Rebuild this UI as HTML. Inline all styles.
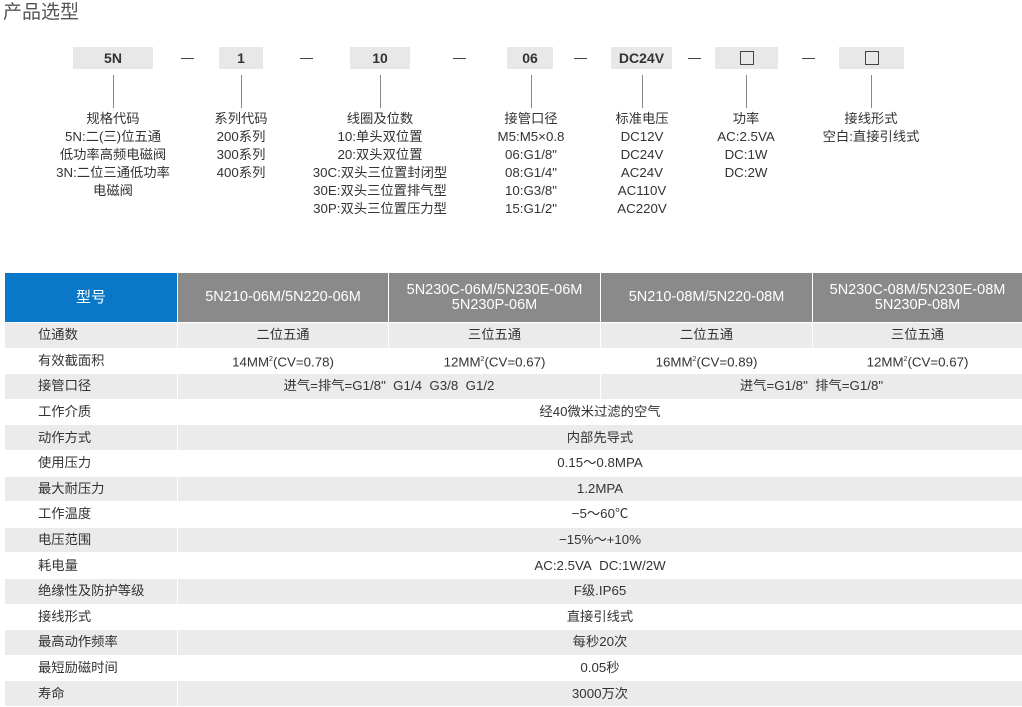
<!DOCTYPE html>
<html><head><meta charset="utf-8"><style>
*{margin:0;padding:0;box-sizing:border-box}
body{width:1022px;height:706px;background:#fff;position:relative;overflow:hidden;font-family:"Liberation Sans","Noto Sans CJK SC",sans-serif;color:#333}
.t{position:absolute;left:3px;top:1px;font-size:19px;color:#555;line-height:24px}
.b{position:absolute;top:47px;height:22px;background:#e8e8e8;font-size:14px;font-weight:bold;text-align:center;line-height:22px;color:#333}
.sq{display:inline-block;width:14px;height:14px;border:1.5px solid #444;vertical-align:middle;margin-top:-3px}
.d{position:absolute;top:58px;width:13px;height:1px;background:#444}
.v{position:absolute;top:75px;width:1px;height:33px;background:#888}
.l{position:absolute;top:110px;font-size:13.3px;line-height:18px;text-align:center;width:200px;color:#333}
table{position:absolute;left:4px;top:272px;width:1018px;border-collapse:collapse;font-size:13.3px;table-layout:fixed}
td{border:1px solid #fff;height:25.6px;text-align:center;padding:0;line-height:14px}
td:first-child{text-align:left;padding-left:33px}
tr:nth-child(even) td{background:#ebebeb}
tr.h td{height:50px;background:#8a8a8a;color:#fff;font-size:14.5px;line-height:15px}
tr.h td:first-child{background:#0a78c8;text-align:center;padding-left:0;font-size:15px}
sup{font-size:7px}
</style></head><body>
<div class="t">产品选型</div>
<div class="b" style="left:73px;width:80px">5N</div>
<div class="b" style="left:219px;width:44px">1</div>
<div class="b" style="left:350px;width:60px">10</div>
<div class="b" style="left:507px;width:46px">06</div>
<div class="b" style="left:611px;width:61px">DC24V</div>
<div class="b" style="left:715px;width:63px"><span class="sq"></span></div>
<div class="b" style="left:839px;width:65px"><span class="sq"></span></div>
<div class="d" style="left:181px"></div><div class="d" style="left:300px"></div><div class="d" style="left:453px"></div>
<div class="d" style="left:574px"></div><div class="d" style="left:688px"></div><div class="d" style="left:802px"></div>
<div class="v" style="left:113px"></div><div class="v" style="left:241px"></div><div class="v" style="left:380px"></div>
<div class="v" style="left:531px"></div><div class="v" style="left:642px"></div><div class="v" style="left:746px"></div><div class="v" style="left:871px"></div>
<div class="l" style="left:13px">规格代码<br>5N:二(三)位五通<br>低功率高频电磁阀<br>3N:二位三通低功率<br>电磁阀</div>
<div class="l" style="left:141px">系列代码<br>200系列<br>300系列<br>400系列</div>
<div class="l" style="left:280px">线圈及位数<br>10:单头双位置<br>20:双头双位置<br>30C:双头三位置封闭型<br>30E:双头三位置排气型<br>30P:双头三位置压力型</div>
<div class="l" style="left:431px">接管口径<br>M5:M5×0.8<br>06:G1/8"<br>08:G1/4"<br>10:G3/8"<br>15:G1/2"</div>
<div class="l" style="left:542px">标准电压<br>DC12V<br>DC24V<br>AC24V<br>AC110V<br>AC220V</div>
<div class="l" style="left:646px">功率<br>AC:2.5VA<br>DC:1W<br>DC:2W</div>
<div class="l" style="left:771px">接线形式<br>空白:直接引线式</div>
<table>
<colgroup><col style="width:173px"><col style="width:211px"><col style="width:212px"><col style="width:212px"><col style="width:210px"></colgroup>
<tr class="h"><td>型号</td><td>5N210-06M/5N220-06M</td><td>5N230C-06M/5N230E-06M<br>5N230P-06M</td><td>5N210-08M/5N220-08M</td><td>5N230C-08M/5N230E-08M<br>5N230P-08M</td></tr>
<tr><td>位通数</td><td>二位五通</td><td>三位五通</td><td>二位五通</td><td>三位五通</td></tr>
<tr><td>有效截面积</td><td>14MM<sup>2</sup>(CV=0.78)</td><td>12MM<sup>2</sup>(CV=0.67)</td><td>16MM<sup>2</sup>(CV=0.89)</td><td>12MM<sup>2</sup>(CV=0.67)</td></tr>
<tr><td>接管口径</td><td colspan="2">进气=排气=G1/8"&nbsp; G1/4&nbsp; G3/8&nbsp; G1/2</td><td colspan="2">进气=G1/8"&nbsp; 排气=G1/8"</td></tr>
<tr><td>工作介质</td><td colspan="4">经40微米过滤的空气</td></tr>
<tr><td>动作方式</td><td colspan="4">内部先导式</td></tr>
<tr><td>使用压力</td><td colspan="4">0.15～0.8MPA</td></tr>
<tr><td>最大耐压力</td><td colspan="4">1.2MPA</td></tr>
<tr><td>工作温度</td><td colspan="4">−5～60℃</td></tr>
<tr><td>电压范围</td><td colspan="4">−15%～+10%</td></tr>
<tr><td>耗电量</td><td colspan="4">AC:2.5VA&nbsp; DC:1W/2W</td></tr>
<tr><td>绝缘性及防护等级</td><td colspan="4">F级.IP65</td></tr>
<tr><td>接线形式</td><td colspan="4">直接引线式</td></tr>
<tr><td>最高动作频率</td><td colspan="4">每秒20次</td></tr>
<tr><td>最短励磁时间</td><td colspan="4">0.05秒</td></tr>
<tr><td>寿命</td><td colspan="4">3000万次</td></tr>
</table>
</body></html>
